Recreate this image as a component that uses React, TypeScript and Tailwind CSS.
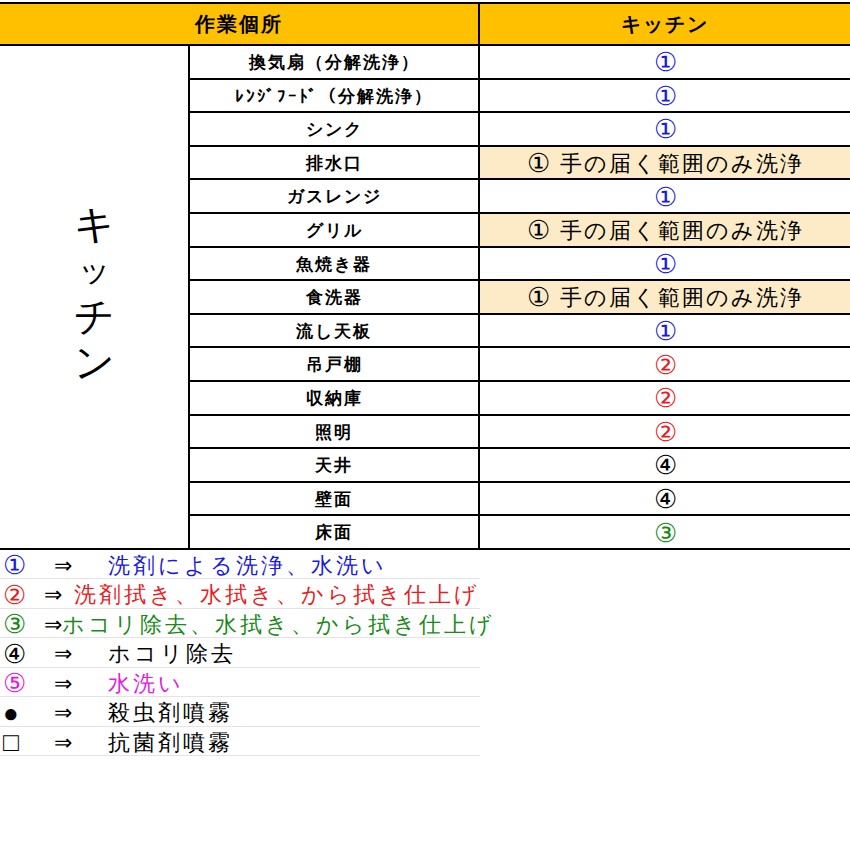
const rows: { name: string; val: string; color: string; hl?: boolean }[] = [
  { name: '換気扇（分解洗浄）', val: '①', color: 'text-[#1a1adf]' },
  { name: 'ﾚﾝｼﾞﾌｰﾄﾞ（分解洗浄）', val: '①', color: 'text-[#1a1adf]' },
  { name: 'シンク', val: '①', color: 'text-[#1a1adf]' },
  { name: '排水口', val: '① 手の届く範囲のみ洗浄', color: 'text-black', hl: true },
  { name: 'ガスレンジ', val: '①', color: 'text-[#1a1adf]' },
  { name: 'グリル', val: '① 手の届く範囲のみ洗浄', color: 'text-black', hl: true },
  { name: '魚焼き器', val: '①', color: 'text-[#1a1adf]' },
  { name: '食洗器', val: '① 手の届く範囲のみ洗浄', color: 'text-black', hl: true },
  { name: '流し天板', val: '①', color: 'text-[#1a1adf]' },
  { name: '吊戸棚', val: '②', color: 'text-[#e81c1c]' },
  { name: '収納庫', val: '②', color: 'text-[#e81c1c]' },
  { name: '照明', val: '②', color: 'text-[#e81c1c]' },
  { name: '天井', val: '④', color: 'text-black' },
  { name: '壁面', val: '④', color: 'text-black' },
  { name: '床面', val: '③', color: 'text-[#1a8a1a]' },
];

const legend: { sym: string; text: string; color: string }[] = [
  { sym: '①', text: '洗剤による洗浄、水洗い', color: 'text-[#1a1adf]' },
  { sym: '②', text: '洗剤拭き、水拭き、から拭き仕上げ', color: 'text-[#e81c1c]' },
  { sym: '③', text: 'ホコリ除去、水拭き、から拭き仕上げ', color: 'text-[#1a8a1a]' },
  { sym: '④', text: 'ホコリ除去', color: 'text-black' },
  { sym: '⑤', text: '水洗い', color: 'text-[#e020e0]' },
  { sym: '●', text: '殺虫剤噴霧', color: 'text-black' },
  { sym: '□', text: '抗菌剤噴霧', color: 'text-black' },
];

export default function App() {
  return (
    <div className="w-[850px] h-[850px] bg-white pt-[2px] font-['Noto_Sans_CJK_JP',sans-serif] text-black">
      <div className="grid grid-cols-[190px_290px_1fr] border-y-2 border-black">
        <div className="col-span-2 h-[40px] bg-[#ffc000] border-r-2 border-black flex items-center justify-center text-[20px] font-bold tracking-[2px]">作業個所</div>
        <div className="h-[40px] bg-[#ffc000] flex items-center justify-center text-[20px] font-bold tracking-[2px]">キッチン</div>
        <div className="border-t-2 border-r-2 border-black flex items-center justify-center" style={{ gridRow: 'span 15' }}>
          <div className="flex flex-col items-center text-[40px] leading-[46px] mt-[-10px]">
            <span>キ</span><span className="text-[32px]">ッ</span><span>チ</span><span>ン</span>
          </div>
        </div>
        {rows.map((r, i) => (
          <div key={i} className="contents">
            <div className="h-[33.6px] border-t-2 border-r-2 border-black flex items-center justify-center text-[17px] font-bold tracking-[2px] whitespace-nowrap">{r.name}</div>
            <div className={`h-[33.6px] border-t-2 border-black flex items-center justify-center ${r.color} ${r.hl ? 'bg-[#fdebc8] text-[22px] font-medium tracking-[2px]' : 'text-[26px]'}`}>
              {r.hl ? (
                <><span className="text-[26px] mr-[8px]">①</span>手の届く範囲のみ洗浄</>
              ) : r.val}
            </div>
          </div>
        ))}
      </div>
      <div className="w-[480px]">
        {legend.map((l, i) => (
          <div key={i} className={`h-[29.5px] flex items-center border-b border-[#e4e4e4] text-[22px] font-medium ${l.color}`}>
            <span className="w-[36px] pl-[3px] text-[26px] leading-none">{l.sym}</span>
            <span className="w-[72px] pl-[18px] text-black">⇒</span>
            <span className="whitespace-nowrap tracking-[3px]">{l.text}</span>
          </div>
        ))}
      </div>
    </div>
  );
}
